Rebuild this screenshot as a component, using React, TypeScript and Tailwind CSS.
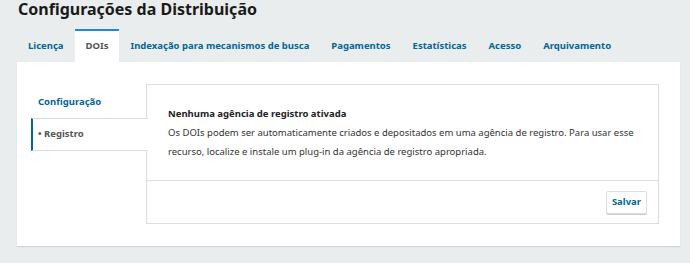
const tabs = ["Licença", "DOIs", "Indexação para mecanismos de busca", "Pagamentos", "Estatísticas", "Acesso", "Arquivamento"];

export default function App() {
  return (
    <div
      className="h-[263px] w-[690px] overflow-hidden bg-[#eaedee] text-[#222]"
      style={{ fontFamily: '"Noto Sans", sans-serif' }}
    >
      <h1 className="pl-[18px] text-[16px] font-bold leading-[19px] text-[#1a1a1a]">
        Configurações da Distribuição
      </h1>

      {/* Tabs */}
      <div className="mt-[10px] flex pl-[17px]">
        {tabs.map((t) =>
          t === "DOIs" ? (
            <div
              key={t}
              className="flex h-[33px] items-center whitespace-nowrap border-t-2 border-[#1e8bd0] bg-white px-[11px] text-[9.5px] font-bold text-[#555]"
            >
              {t}
            </div>
          ) : (
            <div
              key={t}
              className="flex h-[33px] items-center whitespace-nowrap border-t-2 border-transparent px-[11px] text-[9.5px] font-bold text-[#006798]"
            >
              {t}
            </div>
          )
        )}
      </div>

      {/* Panel */}
      <div className="ml-[17px] w-[663px] bg-white pb-[22px] pr-[21px] pt-[22px] shadow-[0_1px_1px_rgba(0,0,0,0.1)]">
        <div className="flex">
          {/* Side nav */}
          <div className="w-[129px] shrink-0 pt-[9px]">
            <div className="pl-[21px] text-[9.5px] font-bold leading-[18px] text-[#006798]">Configuração</div>
            <div className="relative z-10 mt-[7px] ml-[14px] mr-[-2px] flex h-[33px] items-center border-y border-l-2 border-y-[#ddd] border-l-[#006798] bg-white pl-[5px] text-[9.5px] font-bold text-[#555]">
              • Registro
            </div>
          </div>

          {/* Content box */}
          <div className="flex-1 border border-[#ddd]">
            <div className="px-[21px] pb-[19px] pt-[20px]">
              <div className="text-[9.5px] font-bold leading-[18px] text-[#222]">
                Nenhuma agência de registro ativada
              </div>
              <p className="mt-[1px] text-[9.5px] leading-[18.5px] text-[#333]">
                Os DOIs podem ser automaticamente criados e depositados em uma agência de registro. Para usar esse
                recurso, localize e instale um plug-in da agência de registro apropriada.
              </p>
            </div>
            <div className="flex justify-end border-t border-[#ddd] pb-[9px] pr-[11px] pt-[10px]">
              <button className="h-[23px] rounded-[2px] border border-[#ddd] bg-white px-[5px] text-[9.5px] font-bold text-[#006798] shadow-[0_1px_0_#ccc]">
                Salvar
              </button>
            </div>
          </div>
        </div>
      </div>
    </div>
  );
}
